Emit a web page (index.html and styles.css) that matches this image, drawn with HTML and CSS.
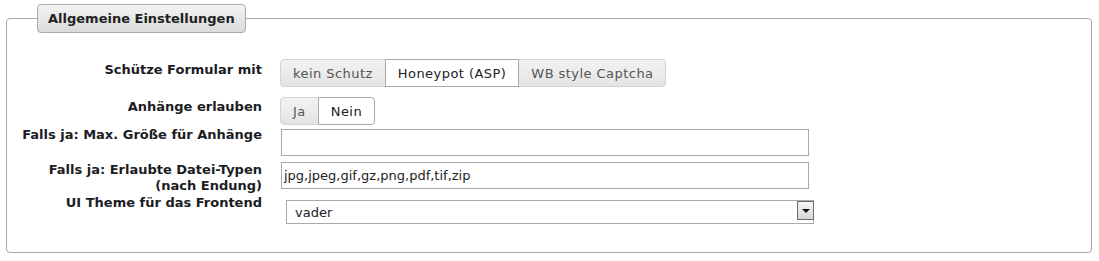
FILE: index.html
```html
<!DOCTYPE html>
<html lang="de">
<head>
    <meta charset="UTF-8">
    <title>Allgemeine Einstellungen</title>
    <link rel="stylesheet" href="styles.css">
</head>
<body>
    <fieldset class="settings">
        <legend>Allgemeine Einstellungen</legend>

        <div class="row row-protect">
            <label class="row-label">Schütze Formular mit</label>
            <div class="buttonset">
                <button class="btn first">kein Schutz</button>
                <button class="btn active">Honeypot (ASP)</button>
                <button class="btn last">WB style Captcha</button>
            </div>
        </div>

        <div class="row row-attach">
            <label class="row-label">Anhänge erlauben</label>
            <div class="buttonset">
                <button class="btn first">Ja</button>
                <button class="btn active last">Nein</button>
            </div>
        </div>

        <div class="row row-size">
            <label class="row-label" for="maxSize">Falls ja: Max. Größe für Anhänge</label>
            <input type="text" id="maxSize" class="text-input" value="">
        </div>

        <div class="row row-types">
            <label class="row-label" for="fileTypes">Falls ja: Erlaubte Datei-Typen<br>(nach Endung)</label>
            <input type="text" id="fileTypes" class="text-input" value="jpg,jpeg,gif,gz,png,pdf,tif,zip">
        </div>

        <div class="row row-theme">
            <label class="row-label" for="theme">UI Theme für das Frontend</label>
            <div class="select-wrap">
                <select id="theme" class="select">
                    <option>vader</option>
                </select>
                <span class="select-arrow"></span>
            </div>
        </div>
    </fieldset>
</body>
</html>
```

FILE: styles.css
```css
body {
    margin: 0;
    font-family: "DejaVu Sans", Verdana, sans-serif;
    font-size: 13px;
    color: #222;
    background: #fff;
}
.settings {
    margin: 4px 7px 0 6px;
    padding: 0 0 28px 0;
    border: 1px solid #aaa;
    border-radius: 4px;
    min-width: 0;
}
.settings legend {
    margin-left: 30px;
    padding: 0 10px;
    height: 27px;
    line-height: 27px;
    font-weight: bold;
    color: #222;
    border: 1px solid #aaa;
    border-radius: 4px;
    background: linear-gradient(#f4f4f4, #dadada);
}
.row {
    display: flex;
    align-items: flex-start;
}
.row-label {
    width: 255px;
    flex: none;
    text-align: right;
    font-weight: bold;
    line-height: 16px;
    color: #1c1c24;
}
.row-protect {
    margin-top: 26px;
}
.row-protect .row-label {
    padding-top: 3px;
}
.row-attach {
    margin-top: 10px;
}
.row-attach .row-label {
    padding-top: 2px;
}
.row-size {
    margin-top: 2px;
}
.row-size .text-input {
    margin-top: 2px;
}
.row-types {
    margin-top: 6px;
}
.row-theme {
    margin-top: 1px;
}
.buttonset {
    display: flex;
    margin-left: 18px;
}
.btn {
    height: 28px;
    padding: 0 12px;
    margin: 0 0 0 -1px;
    font-family: inherit;
    font-size: 13px;
    letter-spacing: 0.45px;
    color: #555;
    border: 1px solid #d3d3d3;
    border-radius: 0;
    background: linear-gradient(#f2f2f2, #e4e4e4);
}
.btn.first {
    margin-left: 0;
    border-radius: 4px 0 0 4px;
}
.btn.last {
    border-radius: 0 4px 4px 0;
}
.btn.active {
    position: relative;
    color: #212121;
    border-color: #aaa;
    background: #fff;
}
.text-input {
    margin-left: 19px;
    width: 528px;
    height: 27px;
    box-sizing: border-box;
    padding: 0 2px;
    font-family: inherit;
    font-size: 13px;
    color: #222;
    border: 1px solid #a3abb4;
    outline: none;
}
.select-wrap {
    position: relative;
    margin: 5px 0 0 24px;
    width: 528px;
}
.select {
    appearance: none;
    display: block;
    width: 100%;
    height: 24px;
    padding: 0 8px;
    font-family: inherit;
    font-size: 13px;
    color: #222;
    background: #fff;
    border: 1px solid #a3abb4;
    border-radius: 0;
}
.select-arrow {
    position: absolute;
    top: 1px;
    right: 0;
    width: 15px;
    height: 17px;
    border: 1px solid #6b6b6b;
    background: linear-gradient(#f6f6f6, #d6d6d6);
}
.select-arrow::after {
    content: "";
    position: absolute;
    left: 4px;
    top: 7px;
    border-left: 4px solid transparent;
    border-right: 4px solid transparent;
    border-top: 4px solid #111;
}
```
